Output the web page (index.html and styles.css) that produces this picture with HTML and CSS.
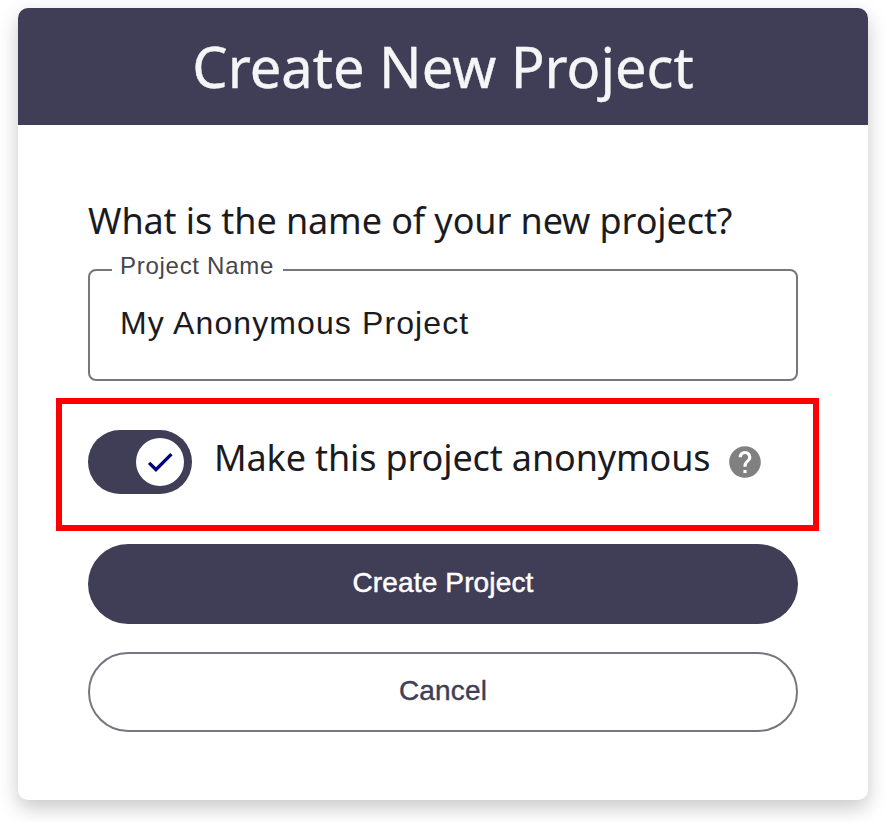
FILE: index.html
```html
<!DOCTYPE html>
<html lang="en">
<head>
<meta charset="utf-8">
<title>Create New Project</title>
<link rel="stylesheet" href="styles.css">
</head>
<body>
<main class="dialog">
  <header class="dialog-header"><h1>Create New Project</h1></header>
  <form class="dialog-body">
    <h2 class="question">What is the name of your new project?</h2>
    <fieldset class="field">
      <legend>Project Name</legend>
      <div class="field-value">My Anonymous Project</div>
    </fieldset>
    <div class="option">
      <div class="switch"><div class="thumb">
        <svg width="32" height="32" viewBox="0 0 24 24"><path fill="#000080" d="M19.69 5.23 8.96 15.96l-4.23-4.23L2.96 13.5l6 6L21.46 7z"/></svg>
      </div></div>
      <span class="option-label">Make this project anonymous</span>
      <svg class="help" width="38" height="38" viewBox="0 0 24 24"><path fill="#808080" d="M12 2C6.48 2 2 6.48 2 12s4.48 10 10 10 10-4.480 10-10S17.520 2 12 2zm1 17h-2v-2h2v2zm2.070-7.750l-.9.920C13.450 12.900 13 13.500 13 15h-2v-.5c0-1.100.450-2.100 1.170-2.830l1.240-1.260c.370-.360.590-.860.590-1.410 0-1.100-.9-2-2-2s-2 .9-2 2H8c0-2.210 1.790-4 4-4s4 1.790 4 4c0 .880-.360 1.680-.930 2.250z"/></svg>
    </div>
    <button type="button" class="btn primary">Create Project</button>
    <button type="button" class="btn outline">Cancel</button>
  </form>
</main>
</body>
</html>
```

FILE: styles.css
```css
* { box-sizing: border-box; }
body { margin: 0; padding: 8px 20px 22px 18px; background: #fff; height: 822px; overflow: hidden; }
.dialog { height: 792px; border-radius: 10px; background: #fff; overflow: hidden; font-family: "Noto Sans", sans-serif; color: #1b1b1f; box-shadow: 0 8px 20px rgba(0,0,0,.22); }
.dialog-header { height: 117px; background: #403d56; color: #f5f5f5; text-align: center; }
h1 { margin: 0; font-size: 56px; font-weight: 400; line-height: 117px; -webkit-text-stroke: .4px #f5f5f5; }
.dialog-body { padding: 70px 70px 0; }
.question { margin: 0; height: 62px; font-size: 36px; line-height: 52px; font-weight: 400; letter-spacing: -.1px; white-space: nowrap; }
.field { margin: 0; height: 124px; padding: 0 30px; border: 2px solid #757680; border-radius: 8px; font-family: "Liberation Sans", sans-serif; }
.field legend { margin-left: -8px; padding: 0 9px 8px 8px; font-size: 24px; line-height: 18px; letter-spacing: .72px; color: #45464f; }
.field-value { font-size: 32px; line-height: 40px; margin-top: 20px; letter-spacing: 1.1px; white-space: nowrap; }
.option { display: flex; align-items: center; width: 763px; height: 133px; margin: 17px 0 13px -32px; padding: 0 26px 5px; border: 6px solid #f00; }
.switch { display: flex; align-items: center; justify-content: flex-end; width: 104px; height: 64px; padding: 8px; border-radius: 32px; background: #403d56; }
.thumb { display: flex; align-items: center; justify-content: center; width: 48px; height: 48px; border-radius: 50%; background: #fff; }
.option-label { margin: -9px 0 0 22px; width: 512px; font-size: 36px; letter-spacing: -.13px; white-space: nowrap; }
.help { flex: none; }
.btn { display: block; width: 710px; height: 80px; margin: 0 0 28px; padding: 0 0 2px; border: 0; border-radius: 40px; font: 28px "Liberation Sans", sans-serif; letter-spacing: .15px; }
.primary { background: #403d56; color: #fff; -webkit-text-stroke: .5px #fff; }
.outline { background: #fff; color: #403d56; border: 2px solid #757680; -webkit-text-stroke: .4px #403d56; }
```
